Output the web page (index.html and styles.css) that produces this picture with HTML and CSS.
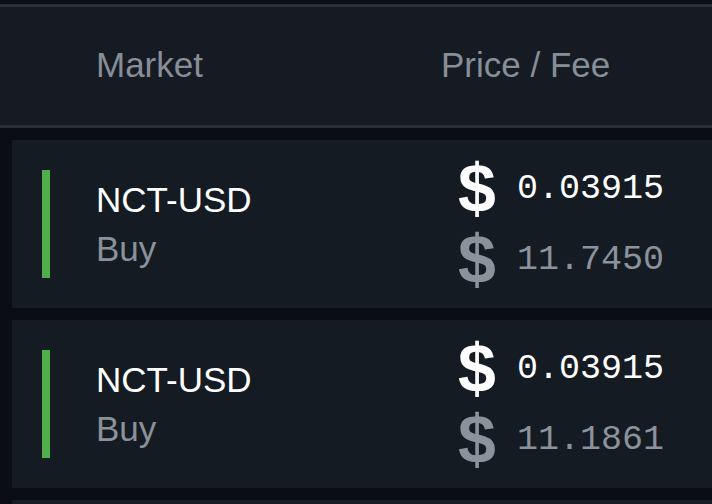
FILE: index.html
```html
<!DOCTYPE html>
<html lang="en">
<head>
    <meta charset="UTF-8">
    <meta name="viewport" content="width=device-width, initial-scale=1.0">
    <title>Orders</title>
    <link rel="stylesheet" href="styles.css">
</head>
<body>
    <!-- Table header -->
    <div class="table-head">
        <div class="col-market">Market</div>
        <div class="col-price">Price / Fee</div>
    </div>

    <!-- Order rows -->
    <div class="order-list">
        <div class="order">
            <div class="side-bar buy"></div>
            <div class="market">
                <div class="pair">NCT-USD</div>
                <div class="side">Buy</div>
            </div>
            <div class="amounts">
                <div class="amount">
                    <span class="dollar">$</span>
                    <span class="value">0.03915</span>
                </div>
                <div class="amount fee">
                    <span class="dollar">$</span>
                    <span class="value">11.7450</span>
                </div>
            </div>
        </div>

        <div class="order">
            <div class="side-bar buy"></div>
            <div class="market">
                <div class="pair">NCT-USD</div>
                <div class="side">Buy</div>
            </div>
            <div class="amounts">
                <div class="amount">
                    <span class="dollar">$</span>
                    <span class="value">0.03915</span>
                </div>
                <div class="amount fee">
                    <span class="dollar">$</span>
                    <span class="value">11.1861</span>
                </div>
            </div>
        </div>

        <div class="order"></div>
    </div>
</body>
</html>
```

FILE: styles.css
```css
* {
    box-sizing: border-box;
    margin: 0;
    padding: 0;
}

body {
    background: #0a0e14;
    font-family: 'Liberation Sans', Arial, sans-serif;
    height: 100vh;
    overflow: hidden;
    padding-top: 4px;
}

/* Table header */
.table-head {
    display: grid;
    grid-template-columns: 345px auto;
    align-items: center;
    height: 124px;
    padding: 0 0 3px 96px;
    background: #161b23;
    border-top: 3px solid #2a2f37;
    border-bottom: 3px solid #2a2f37;
    color: #868e98;
    font-size: 35px;
}

/* Order rows */
.order-list {
    display: flex;
    flex-direction: column;
    gap: 12px;
    padding: 12px 0 0 12px;
}

.order {
    display: flex;
    align-items: center;
    height: 168px;
    padding: 0 48px 0 30px;
    background: #151b22;
    flex-shrink: 0;
}

.side-bar {
    width: 8px;
    height: 108px;
}

.side-bar.buy {
    background: #52ae4b;
}

.market {
    margin-left: 46px;
    font-size: 35px;
    line-height: 49px;
}

.market .pair {
    color: #ffffff;
}

.market .side {
    color: #8a919b;
}

.amounts {
    margin-left: auto;
}

.amount {
    display: flex;
    align-items: center;
    gap: 22px;
    height: 71px;
    color: #ffffff;
}

.amount.fee {
    color: #8b929c;
}

.dollar {
    width: 37px;
    font-size: 68px;
    font-weight: 700;
    line-height: 71px;
    text-align: center;
}

.value {
    font-family: 'Liberation Mono', 'Courier New', monospace;
    font-size: 35px;
}
```
